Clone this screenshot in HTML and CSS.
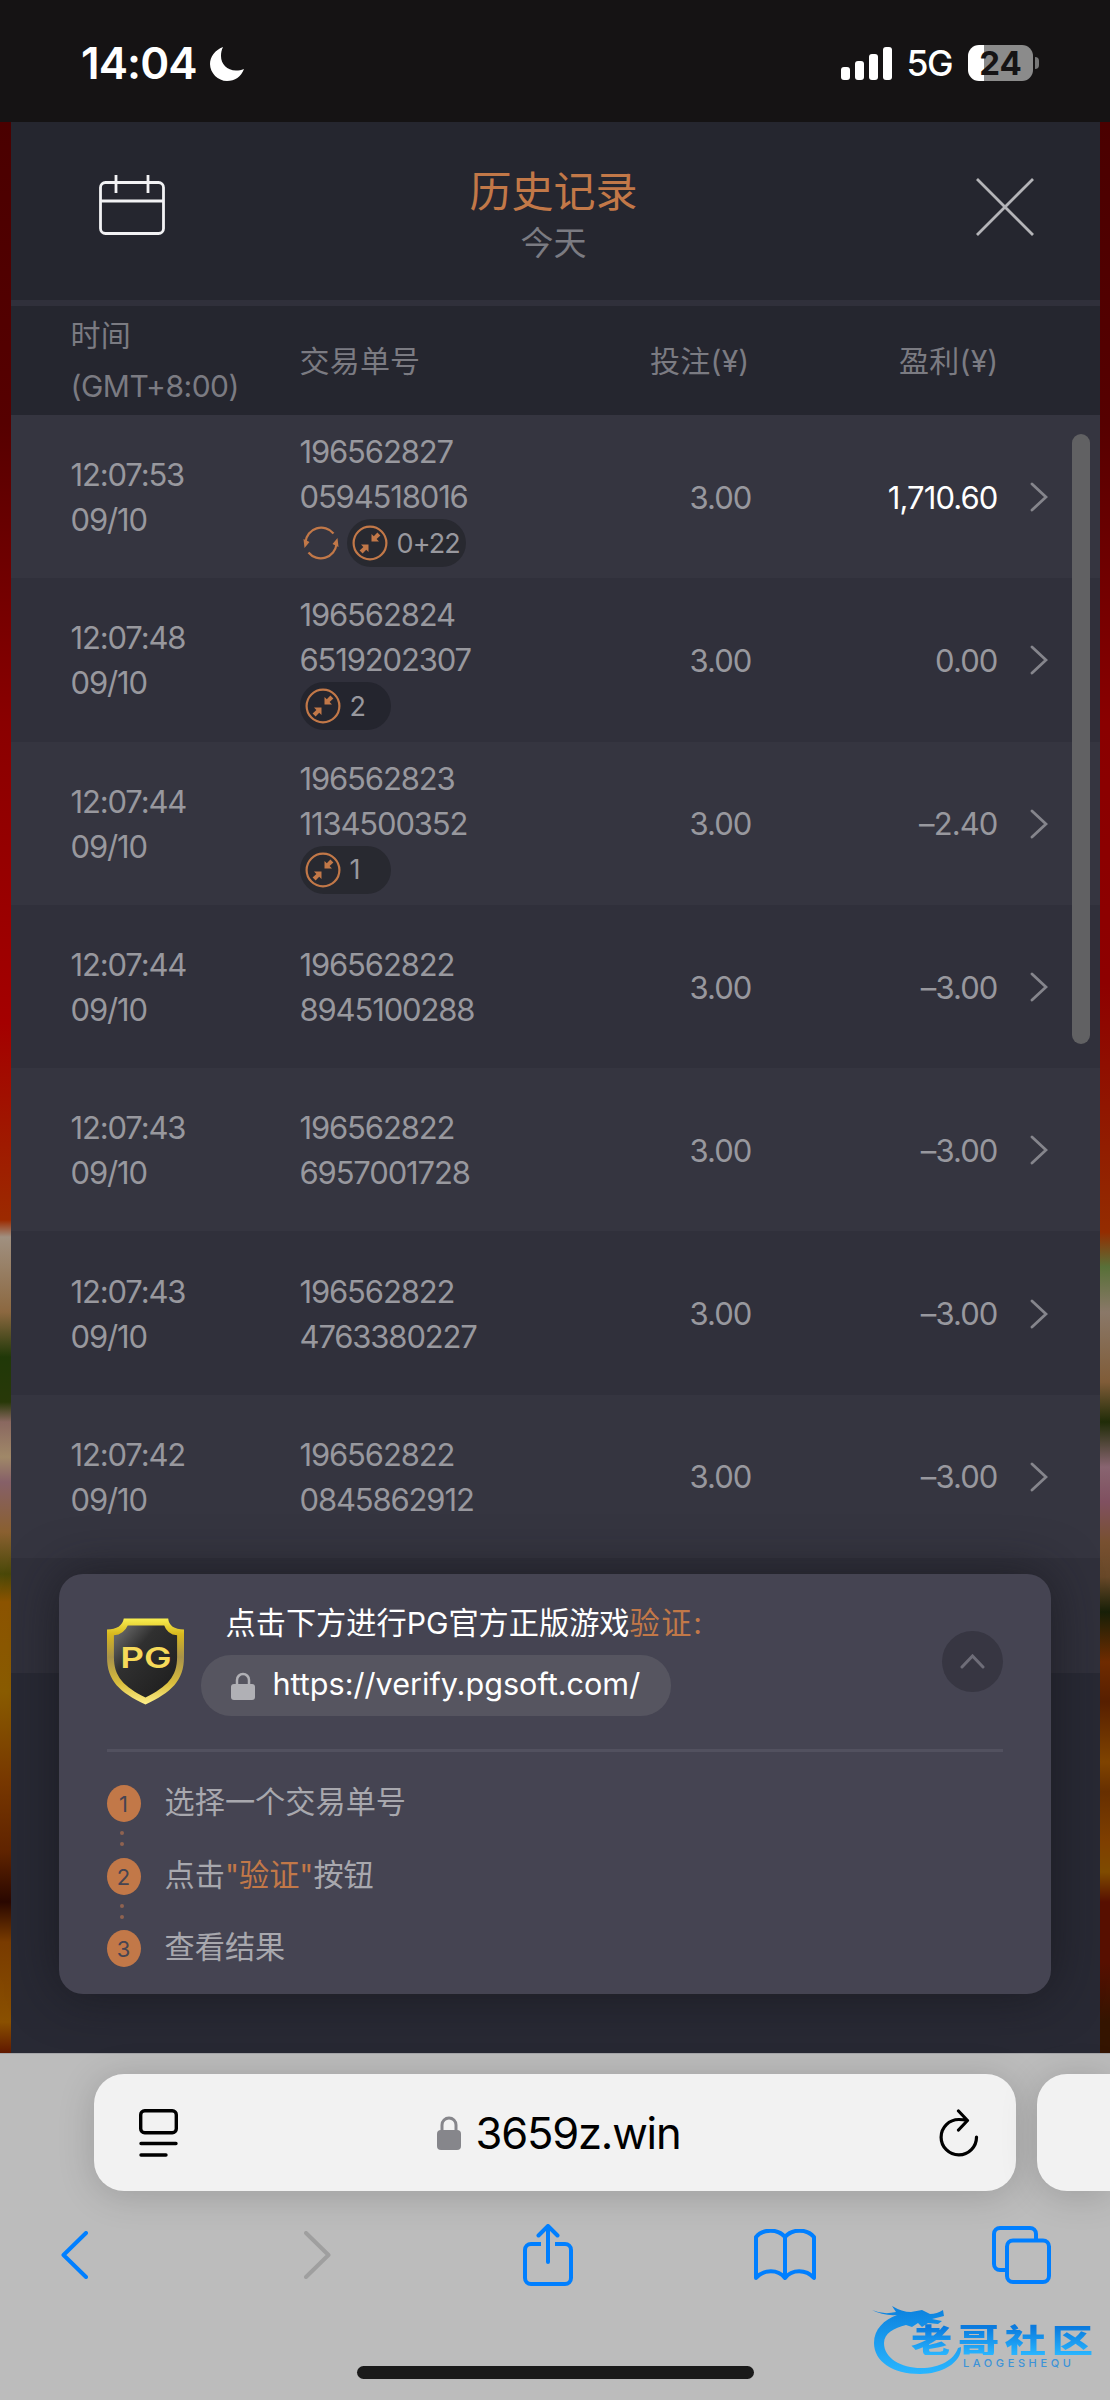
FILE: index.html
```
<!DOCTYPE html>
<html lang="zh-CN">
<head>
  <meta charset="UTF-8">
  <title>历史记录</title>
  <link rel="stylesheet" href="styles.css">
</head>
<body>
  <svg class="defs" width="0" height="0">
    <symbol id="collapse" viewBox="0 0 36 36">
      <circle cx="18" cy="18" r="16.4" fill="none" stroke="#c27848" stroke-width="2.2"/>
      <path d="M19.500 9v7.500h7.500l-2.400-2.400 3.800-3.600-3-3-3.600 3.800zM16.500 27v-7.500H9l2.400 2.400-3.800 3.600 3 3 3.600-3.800z" fill="#c27848"/>
    </symbol>
    <symbol id="chevron" viewBox="0 0 18 30">
      <path d="M2 2l14 13L2 28" fill="none" stroke="#85858c" stroke-width="2.8" stroke-linecap="round"/>
    </symbol>
  </svg>

  <div class="status-bar">
    <div class="status-left">
      <span class="clock">14:04</span>
      <svg width="34" height="35" viewBox="0 0 34 35"><path d="M13 1C5 4 0 11 0 18c0 9 8 17 17 17 8 0 14-4 17-12-3 1-5 1.500-8 1.500C17 24.500 11 18 11 10c0-3 .5-6 2-9z" fill="#fff"/></svg>
    </div>
    <div class="status-right">
      <svg width="51" height="33" viewBox="0 0 51 33" fill="#fff"><rect y="20" width="9" height="13" rx="3"/><rect x="14" y="14" width="9" height="19" rx="3"/><rect x="28" y="7" width="9" height="26" rx="3"/><rect x="42" width="9" height="33" rx="3"/></svg>
      <span class="network">5G</span>
      <div class="battery">24</div>
      <div class="battery-tip"></div>
    </div>
  </div>

  <div class="stage">
    <div class="side side-left"></div>
    <div class="panel">
      <div class="panel-header">
        <svg width="66" height="60" viewBox="0 0 66 60" fill="none" stroke="#f2f2f4" stroke-width="2.800"><rect x="1.500" y="7.500" width="63" height="51" rx="5"/><path d="M1 26h64M17 0v18M49 0v18"/></svg>
        <div class="panel-title">
          <h1>历史记录</h1>
          <p>今天</p>
        </div>
        <svg width="58" height="58" viewBox="0 0 58 58"><path d="M1 1l56 56M57 1L1 57" stroke="#b4b4b8" stroke-width="2.800"/></svg>
      </div>
      <div class="row table-head">
        <div class="time">时间<br><span>(GMT+8:00)</span></div>
        <div class="order">交易单号</div>
        <div class="bet">投注(¥)</div>
        <div class="profit">盈利(¥)</div>
      </div>

      <div class="records">
        <div class="row">
          <div class="time">12:07:53<br>09/10</div>
          <div class="order">196562827<br>0594518016
            <div class="tags">
              <svg class="free-spin" width="36" height="36" viewBox="0 0 36 36"><path d="M2.500 17A15.800 15.800 0 0 1 30.500 8.500M33.500 19A15.800 15.800 0 0 1 5.500 27.500" fill="none" stroke="#c27848" stroke-width="2.200"/><path d="M.5 14l1 9 5-6zM35.500 22l-1-9-5 6z" fill="#c27848"/></svg>
              <span class="tag"><svg width="36" height="36"><use href="#collapse"/></svg>0+22</span>
            </div>
          </div>
          <div class="bet">3.00</div>
          <div class="profit win">1,710.60</div>
          <svg class="arrow" width="18" height="30"><use href="#chevron"/></svg>
        </div>
        <div class="row">
          <div class="time">12:07:48<br>09/10</div>
          <div class="order">196562824<br>6519202307
            <div class="tags"><span class="tag short"><svg width="36" height="36"><use href="#collapse"/></svg>2</span></div>
          </div>
          <div class="bet">3.00</div>
          <div class="profit">0.00</div>
          <svg class="arrow" width="18" height="30"><use href="#chevron"/></svg>
        </div>
        <div class="row">
          <div class="time">12:07:44<br>09/10</div>
          <div class="order">196562823<br>1134500352
            <div class="tags"><span class="tag short"><svg width="36" height="36"><use href="#collapse"/></svg>1</span></div>
          </div>
          <div class="bet">3.00</div>
          <div class="profit">–2.40</div>
          <svg class="arrow" width="18" height="30"><use href="#chevron"/></svg>
        </div>
        <div class="row">
          <div class="time">12:07:44<br>09/10</div>
          <div class="order">196562822<br>8945100288</div>
          <div class="bet">3.00</div>
          <div class="profit">–3.00</div>
          <svg class="arrow" width="18" height="30"><use href="#chevron"/></svg>
        </div>
        <div class="row">
          <div class="time">12:07:43<br>09/10</div>
          <div class="order">196562822<br>6957001728</div>
          <div class="bet">3.00</div>
          <div class="profit">–3.00</div>
          <svg class="arrow" width="18" height="30"><use href="#chevron"/></svg>
        </div>
        <div class="row">
          <div class="time">12:07:43<br>09/10</div>
          <div class="order">196562822<br>4763380227</div>
          <div class="bet">3.00</div>
          <div class="profit">–3.00</div>
          <svg class="arrow" width="18" height="30"><use href="#chevron"/></svg>
        </div>
        <div class="row">
          <div class="time">12:07:42<br>09/10</div>
          <div class="order">196562822<br>0845862912</div>
          <div class="bet">3.00</div>
          <div class="profit">–3.00</div>
          <svg class="arrow" width="18" height="30"><use href="#chevron"/></svg>
        </div>
        <div class="row"></div>
        <div class="scrollbar"></div>
      </div>

      <div class="verify-card">
        <div class="verify-top">
          <svg class="shield" width="77" height="87" viewBox="0 0 78 87">
            <defs>
              <linearGradient id="gold" x1="0" y1="0" x2="0" y2="1"><stop offset="0" stop-color="#f8ee50"/><stop offset=".18" stop-color="#d8b81e"/><stop offset=".45" stop-color="#a8924a"/><stop offset=".75" stop-color="#d9bd3c"/><stop offset="1" stop-color="#fff08a"/></linearGradient>
              <linearGradient id="steel" x1="0" y1="0" x2="1" y2="1"><stop offset="0" stop-color="#777"/><stop offset=".35" stop-color="#303030"/><stop offset="1" stop-color="#1c1c1c"/></linearGradient>
            </defs>
            <path d="M17 0h45q1 11 16 11v28c0 24-13 36-39 48C13 75 0 63 0 39V11q15 0 17-11z" fill="url(#gold)"/>
            <path d="M21 7h37q3 9 13 10v22c0 20-10 30-32 41C17 69 7 59 7 39V17q10-1 14-10z" fill="url(#steel)"/>
            <text x="39.500" y="50" text-anchor="middle" textLength="52" lengthAdjust="spacingAndGlyphs">PG</text>
          </svg>
          <div class="verify-info">
            <div class="verify-title">点击下方进行PG官方正版游戏<b>验证:</b></div>
            <div class="verify-url">
              <svg width="24" height="28" viewBox="0 0 24 28"><rect y="12" width="24" height="16" rx="3" fill="#b0b0b5"/><path d="M6 13V8a6 6 0 0 1 12 0v5" fill="none" stroke="#b0b0b5" stroke-width="2.500"/></svg>
              <span>https://verify.pgsoft.com/</span>
            </div>
          </div>
          <div class="toggle"><svg width="25" height="15" viewBox="0 0 25 15"><path d="M2 13L12.500 2 23 13" fill="none" stroke="#6e6d78" stroke-width="3" stroke-linecap="round"/></svg></div>
        </div>
        <div class="steps">
          <div class="step"><i>1</i><span>选择一个交易单号</span></div>
          <div class="step"><i>2</i><span>点击<b>"验证"</b>按钮</span></div>
          <div class="step"><i>3</i><span>查看结果</span></div>
        </div>
      </div>
    </div>
    <div class="side side-right"></div>
  </div>

  <div class="browser">
    <div class="tabs">
      <div class="address">
        <svg width="39" height="48" viewBox="0 0 39 48" fill="none" stroke="#000" stroke-width="3.400" stroke-linecap="round"><rect x="1.700" y="1.700" width="35.600" height="22" rx="4"/><path d="M2 34.500h35M2 46h25"/></svg>
        <div class="domain">
          <svg width="24" height="34" viewBox="0 0 24 34"><rect y="14" width="24" height="20" rx="4" fill="#86868b"/><path d="M5 16V9a7 7 0 0 1 14 0v7" fill="none" stroke="#86868b" stroke-width="3"/></svg>
          <span>3659z.win</span>
        </div>
        <svg width="40" height="48" viewBox="0 0 40 48" fill="none" stroke="#000" stroke-width="3.200" stroke-linecap="round" stroke-linejoin="round"><path d="M37.500 28A17.700 17.700 0 1 1 20 10.500q4.500 0 8 1M19.500 2l9 9.500-9 9.500"/></svg>
      </div>
      <div class="next-tab"></div>
    </div>
    <div class="toolbar">
      <svg width="27" height="48" viewBox="0 0 27 48"><path d="M25 2L2.500 24 25 46"/></svg>
      <svg class="disabled" width="27" height="48" viewBox="0 0 27 48"><path d="M2 2l22.500 22L2 46"/></svg>
      <svg width="50" height="62" viewBox="0 0 50 62"><path d="M18 20H8a6 6 0 0 0-6 6v28a6 6 0 0 0 6 6h34a6 6 0 0 0 6-6V26a6 6 0 0 0-6-6H32" stroke-linecap="butt"/><path d="M25 38V2M15.500 11.500L25 2l9.500 9.500"/></svg>
      <svg width="62" height="52" viewBox="0 0 62 52"><path d="M31 8C24-.5 9-.5 2 8v41C10 40 24 40 31 49 38 40 52 40 60 49V8C53-.5 38-.5 31 8zV49"/></svg>
      <svg width="59" height="58" viewBox="0 0 59 58"><rect x="15" y="14.500" width="42" height="41.500" rx="6"/><path d="M14 44H8a6 6 0 0 1-6-6V8a6 6 0 0 1 6-6h30a6 6 0 0 1 6 6v5"/></svg>
    </div>
    <div class="home-indicator"></div>
    <div class="watermark">
      <svg width="92" height="70" viewBox="0 0 92 70">
        <defs><linearGradient id="blue" x1="0" y1="0" x2="0" y2="1"><stop offset="0" stop-color="#0b80dd"/><stop offset="1" stop-color="#29b6ff"/></linearGradient></defs>
        <path d="M0 4q11 5 24 2l-4-6q10 6 19 6l11-2 8 4q7 0 13-4l1 6-12 3 10 2-4 3-10-1-6 4-4-4-6 4-6-2C22 22 12 27 12 37c0 15 17 25 37 25 19 0 33-8 37-20l3-1c1 16-20 27-41 27C20 68 2 55 2 37 2 23 12 14 25 9Q11 10 0 4z" fill="url(#blue)"/>
      </svg>
      <div class="watermark-label">
        <div class="watermark-text">老哥社区</div>
        <div class="watermark-latin">LAOGESHEQU</div>
      </div>
    </div>
  </div>
</body>
</html>
```
FILE: styles.css
```
* {
  box-sizing: border-box;
}

body {
  margin: 0;
  width: 1110px;
  height: 2400px;
  display: flex;
  flex-direction: column;
  overflow: hidden;
  background: #bcbcbc;
  font-family: Inter, "Noto Sans CJK SC", sans-serif;
}

svg {
  display: block;
  flex: none;
}

.defs {
  position: absolute;
}

/* phone status bar */
.status-bar {
  flex: none;
  height: 122px;
  padding: 4px 71px 0 81px;
  display: flex;
  align-items: center;
  justify-content: space-between;
  background: #151314;
  color: #fff;
}

.status-left,
.status-right {
  display: flex;
  align-items: center;
}

.status-left {
  gap: 13px;
}

.clock {
  font-size: 44px;
  font-weight: 600;
  letter-spacing: -0.9px;
}

.network {
  margin: 0 16px 0 15px;
  font-size: 35.5px;
  font-weight: 500;
  letter-spacing: -1.5px;
}

.battery {
  width: 65px;
  height: 36px;
  border-radius: 11px;
  background: linear-gradient(to right, #fff 16px, #8b8b8b 16px);
  color: #151314;
  font-size: 33px;
  font-weight: 700;
  line-height: 36px;
  text-align: center;
}

.battery-tip {
  width: 4px;
  height: 12px;
  margin-left: 2px;
  border-radius: 0 4px 4px 0;
  background: #777;
}

/* game page */
.stage {
  flex: none;
  height: 1931px;
  display: grid;
  grid-template-columns: 10.5px 1089px 10.5px;
}

.side-left {
  background: linear-gradient(#4a0000 0, #560000 300px, #8a0000 600px, #a40000 900px, #9c2a00 1098px, #a09080 1115px, #8c6840 1190px, #203808 1235px, #283808 1280px, #8a6860 1300px, #a08868 1335px, #866068 1360px, #8a6030 1410px, #4a4808 1452px, #8c5400 1480px, #8a5c00 1570px, #783800 1660px, #602400 1730px, #2a0800 1780px, #7a3c00 1820px, #8a5000 1900px, #601800 1931px);
}

.side-right {
  background: linear-gradient(#4a0000 0, #560000 300px, #8a0000 600px, #8e0000 860px, #942c00 1110px, #587038 1145px, #8a7868 1190px, #805c38 1260px, #202c08 1300px, #886470 1345px, #805060 1380px, #785030 1420px, #684828 1455px, #182008 1490px, #702c00 1540px, #582000 1580px, #804400 1640px, #683000 1670px, #804000 1720px, #804c00 1750px, #581000 1780px, #581000 1840px, #341400 1900px);
}

.panel {
  position: relative;
  background: #282934;
}

.panel-header {
  height: 184px;
  padding: 0 66px 0 88px;
  display: grid;
  grid-template-columns: 66px 1fr 58px;
  background: #25262f;
  border-bottom: 6px solid #30303b;
}

.panel-header > svg {
  margin-top: 53px;
}

.panel-header > svg:last-child {
  margin-top: 56px;
}

.panel-title {
  margin-top: 42px;
  padding-right: 33px;
  text-align: center;
}

.panel-title h1 {
  margin: 0;
  color: #c27848;
  font-size: 42px;
  font-weight: 400;
  line-height: 56px;
}

.panel-title p {
  margin: 0;
  color: #7b7b82;
  font-size: 33px;
  line-height: 46px;
}

.row {
  position: relative;
  height: 163.3px;
  padding: 1px 0 0 60px;
  display: grid;
  grid-template-columns: 229px 241px 211px 246px 1fr;
  align-items: center;
  color: #98989e;
  font-size: 31px;
  font-weight: 400;
  letter-spacing: -1.15px;
  line-height: 45px;
}

.table-head {
  height: 109px;
  grid-template-columns: 229px 239px 211px 249px 1fr;
  background: #25262f;
  color: #7b7b82;
  font-size: 30px;
  letter-spacing: 0.2px;
  line-height: 51px;
}

.table-head span {
  letter-spacing: -0.5px;
}

.order {
  white-space: nowrap;
}

.bet,
.profit {
  text-align: right;
}

.records .bet,
.records .profit {
  letter-spacing: -0.9px;
}

.records .win {
  color: #fff;
}

.arrow {
  margin-left: 32px;
}

.tags {
  display: flex;
  gap: 8px;
  height: 48px;
  margin-bottom: -2px;
}

.free-spin {
  margin: 6px 0 0 3px;
}

.tag {
  height: 48px;
  padding: 0 6px 0 5px;
  display: flex;
  align-items: center;
  gap: 9px;
  border-radius: 24px;
  background: #282930;
  font-size: 27px;
  letter-spacing: -0.9px;
}

.short {
  width: 91px;
}

.records {
  position: relative;
  height: 1258px;
  overflow: hidden;
}

.records .row {
  background: #353540;
}

.records .row:nth-child(even) {
  background: #30303b;
}

.row:nth-child(even) .tag {
  background: #24252e;
}

.scrollbar {
  position: absolute;
  top: 19px;
  right: 10px;
  width: 18px;
  height: 610px;
  border-radius: 9px;
  background: #616163;
}

/* floating verification card */
.verify-card {
  position: absolute;
  left: 48px;
  bottom: 59px;
  width: 992px;
  height: 420px;
  padding: 25px 48px 0;
  border-radius: 24px;
  background: #454452;
  box-shadow: 0 0 50px rgba(20, 20, 25, 0.65);
}

.verify-top {
  height: 153px;
  display: flex;
  border-bottom: 3px solid #52515f;
}

.shield {
  margin: 19px 1px 0 0;
}

.shield text {
  fill: #f6da5a;
  font-family: Inter, sans-serif;
  font-size: 29px;
  font-weight: 600;
}

.verify-info {
  margin-left: 16px;
  flex: 1;
}

.verify-title {
  height: 56px;
  padding-left: 25px;
  color: #fff;
  font-size: 30.2px;
  line-height: 49px;
}

b {
  color: #c27848;
  font-weight: 400;
}

.verify-title b {
  letter-spacing: 1.6px;
}

.verify-url {
  width: 470px;
  height: 61px;
  padding-left: 30px;
  display: flex;
  align-items: center;
  gap: 18px;
  border-radius: 30px;
  background: #565560;
  color: #fff;
  font-size: 30.6px;
}

.verify-url span {
  padding-bottom: 4px;
}

.toggle {
  width: 61px;
  height: 61px;
  margin-top: 32px;
  display: flex;
  align-items: center;
  justify-content: center;
  border-radius: 50%;
  background: #373642;
}

.steps {
  padding-top: 33px;
}

.step {
  position: relative;
  height: 37px;
  margin-bottom: 35.5px;
  display: flex;
  align-items: center;
  color: #a8a8ae;
  font-size: 30.2px;
}

.step span {
  padding-bottom: 7px;
}

.step i {
  width: 34px;
  height: 37px;
  margin-right: 24px;
  border-radius: 50%;
  background: #c27848;
  color: #454452;
  font-size: 22px;
  font-style: normal;
  font-weight: 400;
  line-height: 38px;
  text-align: center;
}

/* two dots linking a step with the next one */
.step:not(:last-child)::after {
  content: "";
  position: absolute;
  left: 13px;
  top: 46px;
  width: 4px;
  height: 4px;
  border-radius: 50%;
  background: #8f6250;
  box-shadow: 0 11px #8f6250;
}

/* browser chrome */
.browser {
  position: relative;
  flex: 1;
  border-top: 1px solid #a5a5a8;
  background: #bcbcbc;
}

.tabs {
  height: 137px;
  padding: 20px 0 0 94px;
  display: flex;
  gap: 21px;
}

.address,
.next-tab {
  height: 117px;
  border-radius: 30px;
  background: #f2f2f2;
  box-shadow: 0 4px 36px rgba(0, 0, 0, 0.17);
}

.address {
  flex: none;
  width: 922px;
  padding: 0 37px 0 45px;
  display: flex;
  align-items: center;
  justify-content: space-between;
}

.next-tab {
  flex: 1;
  border-radius: 30px 0 0 30px;
}

.domain {
  display: flex;
  align-items: center;
  gap: 15px;
  color: #000;
  font-size: 43.5px;
  letter-spacing: -1.2px;
}

.toolbar {
  width: 1184px;
  height: 62px;
  margin: 33px 0 0 -44px;
  display: grid;
  grid-template-columns: repeat(5, 1fr);
  align-items: center;
  justify-items: center;
  fill: none;
  stroke: #007fff;
  stroke-width: 4;
  stroke-linecap: round;
  stroke-linejoin: round;
}

.toolbar .disabled {
  margin-left: 12px;
  stroke: #9f9f9f;
}

.home-indicator {
  width: 397px;
  height: 13px;
  margin: 80px auto 0;
  border-radius: 7px;
  background: #1a1a1a;
}

.watermark {
  position: absolute;
  left: 872px;
  top: 252px;
  display: flex;
}

.watermark-label {
  margin: 17px 0 0 -53px;
}

.watermark-text {
  height: 32px;
  background: linear-gradient(#0a7ade 4px, #29b6ff 32px);
  background-clip: text;
  color: transparent;
  font-family: "Noto Sans CJK SC", sans-serif;
  font-size: 33px;
  font-weight: 900;
  letter-spacing: 4.5px;
  line-height: 32px;
  transform: scaleX(1.25);
  transform-origin: left;
}

.watermark-latin {
  margin-left: 52px;
  color: #3d93d8;
  font-size: 11px;
  font-weight: 500;
  letter-spacing: 3.6px;
  line-height: 16px;
}
```
